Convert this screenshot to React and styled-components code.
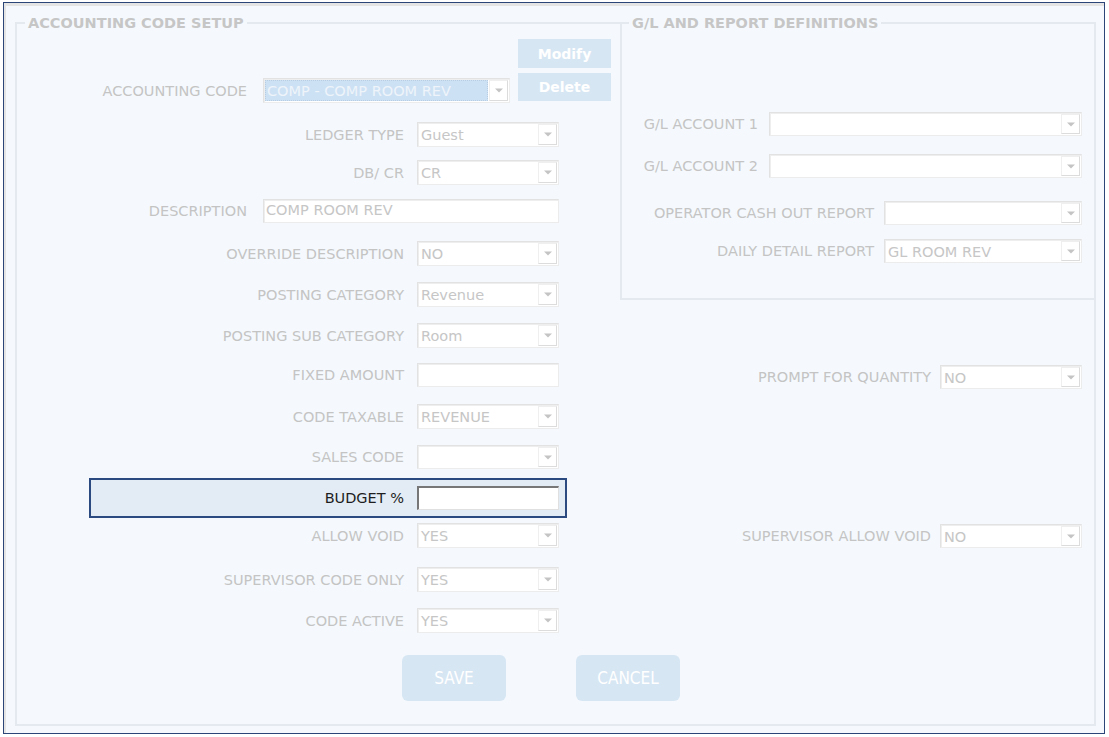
import styled, { createGlobalStyle } from 'styled-components';

const GlobalStyle = createGlobalStyle`
  html, body {
    margin: 0;
    padding: 0;
    background: #ffffff;
  }
  body {
    font-family: "DejaVu Sans", Tahoma, Verdana, sans-serif;
  }
  * {
    box-sizing: border-box;
  }
`;

function Arrow() {
  return (
    <svg width="8" height="5" viewBox="0 0 8 5">
      <path d="M0 0.5h8L4 4.5z" fill="#c4c4c4" />
    </svg>
  );
}

function Select({ value, selected }) {
  return (
    <SelectBox>
      <Value $selected={selected}>{value}</Value>
      <ArrowBox>
        <Arrow />
      </ArrowBox>
    </SelectBox>
  );
}

function Field({ label, value, type = 'select', top = 0, labelW = 387, fieldW = 142, gap = 13 }) {
  return (
    <Row $top={top} $label={labelW} $field={fieldW} $gap={gap}>
      <Label>{label}</Label>
      {type === 'select' ? <Select value={value} /> : <TextBox>{value}</TextBox>}
    </Row>
  );
}

function SideField({ label, value, top = 0, width = 142, gap = 10 }) {
  return (
    <SideRow $top={top} $gap={gap}>
      <Label>{label}</Label>
      <SideControl $w={width}>
        <Select value={value} />
      </SideControl>
    </SideRow>
  );
}

export default function App() {
  return (
    <>
      <GlobalStyle />
      <Page>
        <Frame>
          <Panel>
            <LeftCol>
              <Legend>ACCOUNTING CODE SETUP</Legend>
              <TopBlock>
                <CodeRow>
                  <Label>ACCOUNTING CODE</Label>
                  <Select value="COMP - COMP ROOM REV" selected />
                </CodeRow>
                <ActionStack>
                  <ActionButton $h={29}>Modify</ActionButton>
                  <ActionButton $h={28}>Delete</ActionButton>
                </ActionStack>
              </TopBlock>

              <Field label="LEDGER TYPE" value="Guest" top={21} />
              <Field label="DB/ CR" value="CR" top={14} />
              <Field label="DESCRIPTION" value="COMP ROOM REV" type="text" top={15} labelW={230} fieldW={296} gap={16} />
              <Field label="OVERRIDE DESCRIPTION" value="NO" top={18} />
              <Field label="POSTING CATEGORY" value="Revenue" top={17} />
              <Field label="POSTING SUB CATEGORY" value="Room" top={17} />
              <Field label="FIXED AMOUNT" value="" type="text" top={16} />
              <Field label="CODE TAXABLE" value="REVENUE" top={17} />
              <Field label="SALES CODE" value="" top={17} />

              <FocusBox>
                <Row $top={0} $label={313} $field={142} $gap={13}>
                  <FocusLabel>BUDGET %</FocusLabel>
                  <InsetInput />
                </Row>
              </FocusBox>

              <Field label="ALLOW VOID" value="YES" top={5} />
              <Field label="SUPERVISOR CODE ONLY" value="YES" top={20} />
              <Field label="CODE ACTIVE" value="YES" top={17} />
            </LeftCol>

            <RightCol>
              <GLBox>
                <Legend $left={7}>G/L AND REPORT DEFINITIONS</Legend>
                <SideField label="G/L ACCOUNT 1" value="" top={80} width={313} gap={11} />
                <SideField label="G/L ACCOUNT 2" value="" top={18} width={313} gap={11} />
                <SideField label="OPERATOR CASH OUT REPORT" value="" top={23} width={198} />
                <SideField label="DAILY DETAIL REPORT" value="GL ROOM REV" top={14} width={198} />
              </GLBox>
              <SideField label="PROMPT FOR QUANTITY" value="NO" top={65} gap={9} />
              <SideField label="SUPERVISOR ALLOW VOID" value="NO" top={135} gap={9} />
            </RightCol>

            <ButtonBar>
              <BigButton>SAVE</BigButton>
              <BigButton>CANCEL</BigButton>
            </ButtonBar>
          </Panel>
        </Frame>
      </Page>
    </>
  );
}

const bg = '#f5f9fd';
const line = '#e3e9ef';

const Page = styled.div`
  height: 737px;
  padding: 2px 4px 3px 3px;
  background: #ffffff;
`;

const Frame = styled.div`
  height: 100%;
  display: flex;
  flex-direction: column;
  border: 1px solid #2b4579;
  box-shadow: inset 2px 3px 0 #e4e4e4;
  background: ${bg};
  padding: 19px 8px 7px 11px;
`;

const Panel = styled.div`
  flex: 1;
  display: grid;
  grid-template-columns: 603px 1fr;
  grid-template-rows: auto auto;
  align-content: start;
  border: 2px solid ${line};
`;

const LeftCol = styled.div`
  display: flex;
  flex-direction: column;
`;

const RightCol = styled.div`
  display: flex;
  flex-direction: column;
  padding-right: 12px;
`;

const Legend = styled.div`
  align-self: flex-start;
  margin: -10px 0 0 ${(p) => p.$left ?? 8}px;
  padding: 0 3px;
  background: ${bg};
  font-size: 14.5px;
  font-weight: 700;
  line-height: 18px;
  color: #c6c6c6;
  white-space: nowrap;
`;

const TopBlock = styled.div`
  display: flex;
  align-items: flex-end;
  margin-top: 7px;
`;

const CodeRow = styled.div`
  display: grid;
  grid-template-columns: 230px 247px;
  column-gap: 16px;
  align-items: center;
  height: 22px;
  margin-bottom: 1px;
`;

const ActionStack = styled.div`
  display: flex;
  flex-direction: column;
  gap: 5px;
  margin-left: 8px;
`;

const ActionButton = styled.div`
  width: 93px;
  height: ${(p) => p.$h}px;
  display: flex;
  align-items: center;
  justify-content: center;
  background: #d7e6f3;
  color: #ffffff;
  font-size: 14px;
  font-weight: 700;
`;

const Row = styled.div`
  display: grid;
  grid-template-columns: ${(p) => p.$label}px ${(p) => p.$field}px;
  column-gap: ${(p) => p.$gap}px;
  align-items: center;
  height: 24px;
  margin-top: ${(p) => p.$top}px;
`;

const SideRow = styled.div`
  display: flex;
  justify-content: flex-end;
  align-items: center;
  gap: ${(p) => p.$gap}px;
  height: 24px;
  margin-top: ${(p) => p.$top}px;
`;

const SideControl = styled.div`
  width: ${(p) => p.$w}px;
  height: 100%;
`;

const Label = styled.div`
  text-align: right;
  font-size: 14.5px;
  color: #c4c4c4;
  white-space: nowrap;
`;

const FocusLabel = styled(Label)`
  color: #1e1e1e;
`;

const SelectBox = styled.div`
  display: flex;
  height: 100%;
  background: #ffffff;
  border: 1px solid #e2e2e2;
  border-right-color: #ececec;
  border-bottom-color: #ececec;
  box-shadow: inset 1px 1px 0 #eeeeee;
`;

const Value = styled.span`
  flex: 1;
  margin: 1px 0 1px 1px;
  padding: 1px 0 0 2px;
  font-size: 14.5px;
  line-height: 20px;
  white-space: nowrap;
  overflow: hidden;
  color: ${(p) => (p.$selected ? '#eef4fa' : '#c6c6c6')};
  background: ${(p) => (p.$selected ? '#cde1f4' : 'transparent')};
  outline: ${(p) => (p.$selected ? '1px dotted #b9cde2' : 'none')};
  outline-offset: -1px;
`;

const ArrowBox = styled.span`
  width: 19px;
  margin: 1px;
  display: flex;
  align-items: center;
  justify-content: center;
  border: 1px solid #efefef;
  border-right-color: #dcdcdc;
  border-bottom-color: #dcdcdc;
  background: #ffffff;
`;

const TextBox = styled.div`
  height: 100%;
  padding-left: 2px;
  background: #ffffff;
  border: 1px solid #e2e2e2;
  border-right-color: #ececec;
  border-bottom-color: #ececec;
  box-shadow: inset 1px 1px 0 #eeeeee;
  font-size: 14.5px;
  line-height: 20px;
  color: #c6c6c6;
  white-space: nowrap;
`;

const FocusBox = styled.div`
  margin: 9px 0 0 72px;
  width: 478px;
  height: 40px;
  padding: 6px 0;
  border: 2px solid #2a4a80;
  background: #e3ecf5;
`;

const InsetInput = styled.div`
  height: 24px;
  background: #ffffff;
  border-style: solid;
  border-width: 2px 1px 1px 2px;
  border-color: #777777 #e0e0e0 #e0e0e0 #777777;
`;

const GLBox = styled.div`
  display: flex;
  flex-direction: column;
  margin: -2px -14px 0 0;
  padding: 0 12px 35px 0;
  border: 2px solid ${line};
  background: ${bg};
`;

const ButtonBar = styled.div`
  grid-column: 1 / -1;
  display: flex;
  gap: 70px;
  margin-top: 23px;
  padding-left: 385px;
`;

const BigButton = styled.div`
  width: 104px;
  height: 46px;
  display: flex;
  align-items: center;
  justify-content: center;
  border-radius: 6px;
  background: #d7e6f3;
  color: #ffffff;
  font-family: "DejaVu Sans Condensed", "Liberation Sans Narrow", "Liberation Sans", sans-serif;
  font-size: 17px;
`;
